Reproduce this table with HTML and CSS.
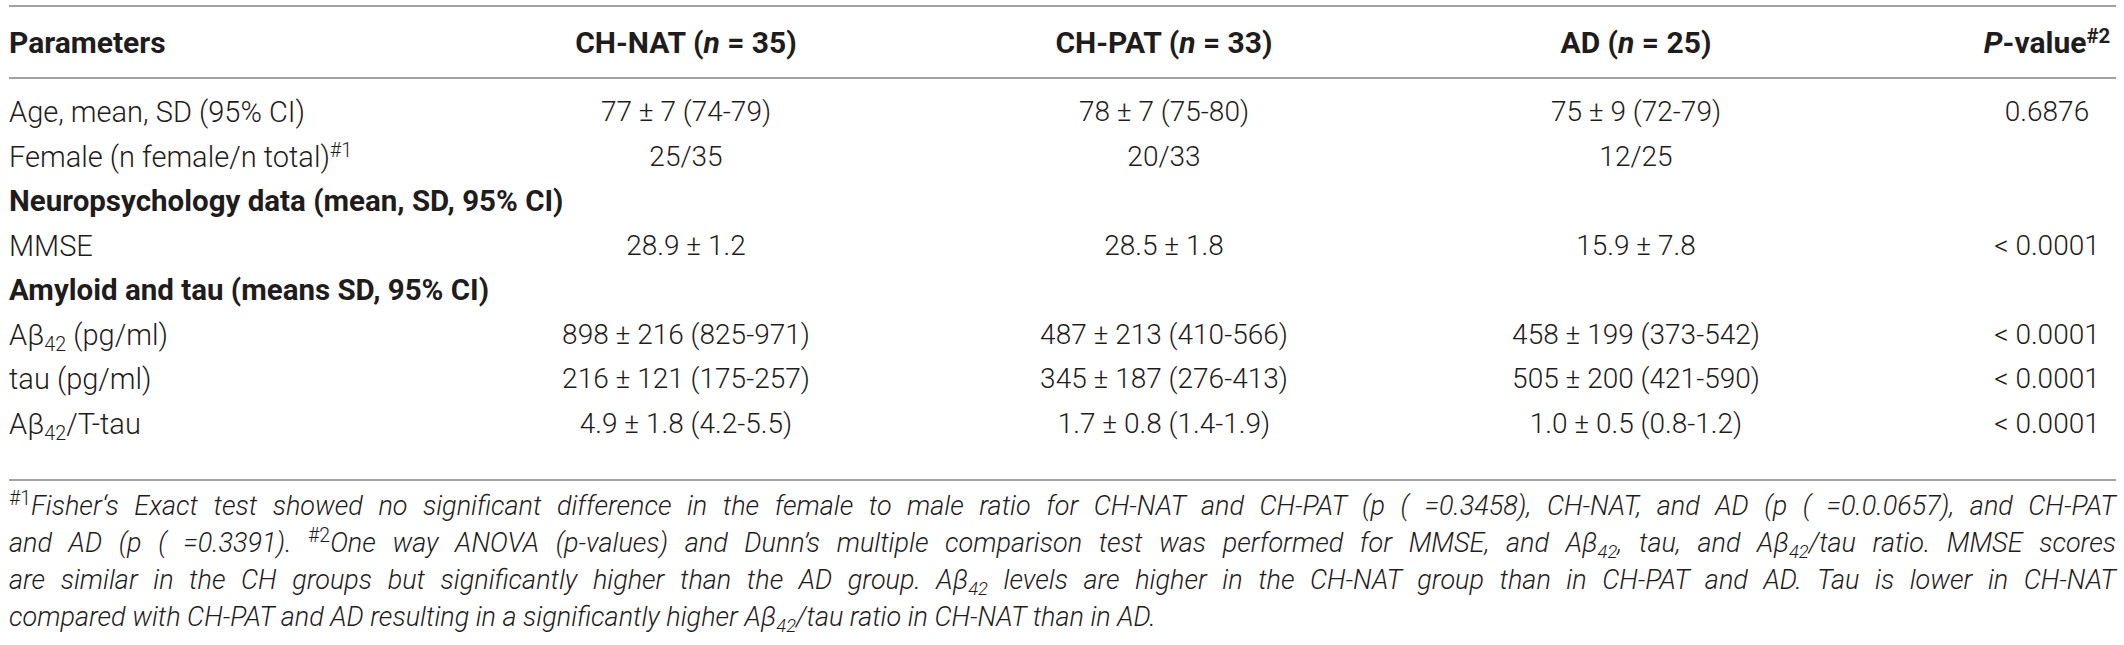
FILE: index.html
```html
<!DOCTYPE html>
<html lang="en">
<head>
    <meta charset="UTF-8">
    <title>Demographics and CSF biomarkers</title>
    <link rel="stylesheet" href="styles.css">
</head>
<body>
    <div class="sheet">
        <table class="params">
            <colgroup>
                <col class="c-name">
                <col class="c-nat">
                <col class="c-pat">
                <col class="c-ad">
                <col class="c-p">
            </colgroup>
            <thead>
                <tr>
                    <th class="name">Parameters</th>
                    <th>CH-NAT (<i>n</i> = 35)</th>
                    <th>CH-PAT (<i>n</i> = 33)</th>
                    <th>AD (<i>n</i> = 25)</th>
                    <th class="pval"><i>P</i>-value<sup>#2</sup></th>
                </tr>
            </thead>
            <tbody>
                <tr class="first">
                    <td class="name">Age, mean, SD (95% CI)</td>
                    <td>77 ± 7 (74-79)</td>
                    <td>78 ± 7 (75-80)</td>
                    <td>75 ± 9 (72-79)</td>
                    <td class="pval">0.6876</td>
                </tr>
                <tr>
                    <td class="name">Female (n female/n total)<sup>#1</sup></td>
                    <td>25/35</td>
                    <td>20/33</td>
                    <td>12/25</td>
                    <td class="pval"></td>
                </tr>
                <tr class="section">
                    <td colspan="5">Neuropsychology data (mean, SD, 95% CI)</td>
                </tr>
                <tr>
                    <td class="name">MMSE</td>
                    <td>28.9 ± 1.2</td>
                    <td>28.5 ± 1.8</td>
                    <td>15.9 ± 7.8</td>
                    <td class="pval">&lt; 0.0001</td>
                </tr>
                <tr class="section">
                    <td colspan="5">Amyloid and tau (means SD, 95% CI)</td>
                </tr>
                <tr>
                    <td class="name">Aβ<sub>42</sub> (pg/ml)</td>
                    <td>898 ± 216 (825-971)</td>
                    <td>487 ± 213 (410-566)</td>
                    <td>458 ± 199 (373-542)</td>
                    <td class="pval">&lt; 0.0001</td>
                </tr>
                <tr>
                    <td class="name">tau (pg/ml)</td>
                    <td>216 ± 121 (175-257)</td>
                    <td>345 ± 187 (276-413)</td>
                    <td>505 ± 200 (421-590)</td>
                    <td class="pval">&lt; 0.0001</td>
                </tr>
                <tr class="last">
                    <td class="name">Aβ<sub>42</sub>/T-tau</td>
                    <td>4.9 ± 1.8 (4.2-5.5)</td>
                    <td>1.7 ± 0.8 (1.4-1.9)</td>
                    <td>1.0 ± 0.5 (0.8-1.2)</td>
                    <td class="pval">&lt; 0.0001</td>
                </tr>
            </tbody>
        </table>

        <p class="notes">
            <span class="line"><sup>#1</sup>Fisher‘s Exact test showed no significant difference in the female to male ratio for CH-NAT and CH-PAT (p ( =0.3458), CH-NAT, and AD (p ( =0.0.0657), and CH-PAT</span>
            <span class="line">and AD (p ( =0.3391). <sup>#2</sup>One way ANOVA (p-values) and Dunn’s multiple comparison test was performed for MMSE, and Aβ<sub>42</sub>, tau, and Aβ<sub>42</sub>/tau ratio. MMSE scores</span>
            <span class="line">are similar in the CH groups but significantly higher than the AD group. Aβ<sub>42</sub> levels are higher in the CH-NAT group than in CH-PAT and AD. Tau is lower in CH-NAT</span>
            <span class="line end">compared with CH-PAT and AD resulting in a significantly higher Aβ<sub>42</sub>/tau ratio in CH-NAT than in AD.</span>
        </p>
    </div>
</body>
</html>
```

FILE: styles.css
```css
html,
body {
    margin: 0;
    padding: 0;
}

body {
    background: #ffffff;
    color: #1f1c1d;
    font-family: Roboto, 'Liberation Sans', Arial, sans-serif;
    font-weight: 300;
}

.sheet {
    width: 2107px;
    padding: 5px 0 0 9px;
}

/* table */
.params {
    width: 2107px;
    border-collapse: collapse;
    table-layout: fixed;
    font-size: 28px;
}

.params col.c-name { width: 437px; }
.params col.c-nat  { width: 480px; }
.params col.c-pat  { width: 476px; }
.params col.c-ad   { width: 468px; }
.params col.c-p    { width: 246px; }

.params th,
.params td {
    padding: 0;
    text-align: center;
    white-space: nowrap;
}

.params th {
    height: 70px;
    font-weight: 700;
    font-size: 30px;
    border-top: 2px solid #a3a3a3;
    border-bottom: 2px solid #a3a3a3;
}

.params td {
    line-height: 44.5px;
}

.params td.name {
    font-size: 29px;
}

.params .name {
    text-align: left;
}

.params .pval {
    padding-left: 108px;
}

.params tr.first td {
    padding-top: 11px;
}

.params tr.last td {
    padding-bottom: 33px;
    border-bottom: 2px solid #a3a3a3;
}

.params tr.section td {
    text-align: left;
    font-weight: 700;
    font-size: 29.5px;
}

sub,
sup {
    font-size: 68%;
    line-height: 0;
}

sub {
    vertical-align: -0.32em;
}

sup {
    vertical-align: 0.5em;
}

/* footnotes */
.notes {
    margin: 0;
    padding-top: 7px;
    font-size: 27px;
    font-style: italic;
    line-height: 37px;
    text-align: justify;
}

.notes sup {
    font-style: normal;
    font-size: 72%;
}

.notes .line {
    display: block;
    text-align-last: justify;
}

.notes .line.end {
    text-align-last: left;
}
```
